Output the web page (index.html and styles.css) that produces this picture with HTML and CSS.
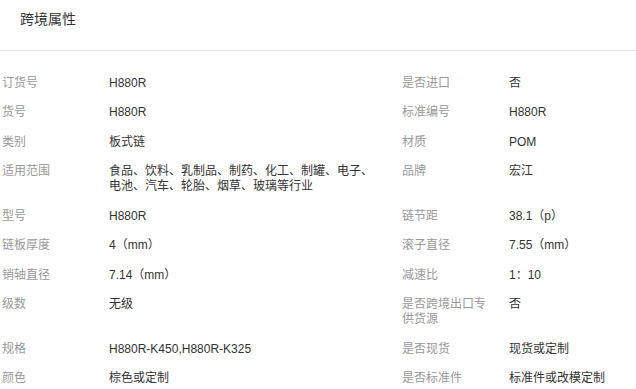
FILE: index.html
```html
<!DOCTYPE html>
<html lang="zh-CN">
<head>
<meta charset="utf-8">
<title>跨境属性</title>
<link rel="stylesheet" href="styles.css">
</head>
<body>
<div class="panel">
  <div class="header">跨境属性</div>
  <div class="attrs">
    <div class="label">订货号</div><div class="value">H880R</div>
    <div class="label right">是否进口</div><div class="value">否</div>

    <div class="label">货号</div><div class="value">H880R</div>
    <div class="label right">标准编号</div><div class="value">H880R</div>

    <div class="label">类别</div><div class="value">板式链</div>
    <div class="label right">材质</div><div class="value">POM</div>

    <div class="label">适用范围</div><div class="value">食品、饮料、乳制品、制药、化工、制罐、电子、电池、汽车、轮胎、烟草、玻璃等行业</div>
    <div class="label right">品牌</div><div class="value">宏江</div>

    <div class="label">型号</div><div class="value">H880R</div>
    <div class="label right">链节距</div><div class="value">38.1（p）</div>

    <div class="label">链板厚度</div><div class="value">4（mm）</div>
    <div class="label right">滚子直径</div><div class="value">7.55（mm）</div>

    <div class="label">销轴直径</div><div class="value">7.14（mm）</div>
    <div class="label right">减速比</div><div class="value">1：10</div>

    <div class="label">级数</div><div class="value">无级</div>
    <div class="label right">是否跨境出口专供货源</div><div class="value">否</div>

    <div class="label">规格</div><div class="value">H880R-K450,H880R-K325</div>
    <div class="label right">是否现货</div><div class="value">现货或定制</div>

    <div class="label">颜色</div><div class="value">棕色或定制</div>
    <div class="label right">是否标准件</div><div class="value">标准件或改模定制</div>
  </div>
</div>
</body>
</html>
```

FILE: styles.css
```css
html, body {
  margin: 0;
  padding: 0;
  background: #fff;
}

body {
  font-family: "Liberation Sans", Arial, "Noto Sans CJK SC", sans-serif;
  font-size: 12px;
  color: #333;
}

.panel {
  width: 636px;
}

.header {
  height: 51px;
  box-sizing: border-box;
  padding: 11px 0 0 20px;
  font-size: 14px;
  line-height: 16px;
  color: #333;
  border-bottom: 1px solid #e6e6e6;
}

.attrs {
  display: grid;
  grid-template-columns: 107px 293px 107px 1fr;
  padding: 17px 0 0 2px;
}

.label,
.value {
  padding: 7.5px 0 7px;
  line-height: 15px;
}

.label {
  color: #999;
  padding-right: 17px;
}

.value {
  color: #333;
  padding-right: 23px;
}
```
